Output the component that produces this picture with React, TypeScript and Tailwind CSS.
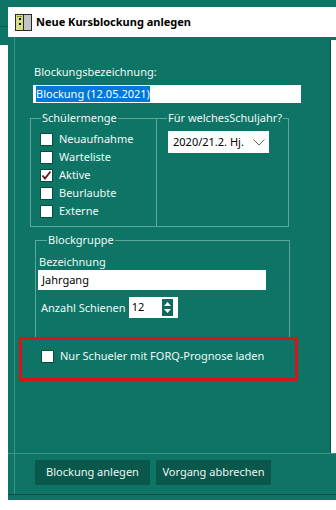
import React from 'react';

const TEAL = 'bg-[#0e7566]';

// Checkbox im Windows-Stil
const Check = ({ label, checked }: { label: string; checked?: boolean }) => (
  <div className="flex items-center h-[18px]">
    <span className="w-[13px] h-[13px] bg-white border border-[#0a4a41] flex items-center justify-center shrink-0">
      {checked && (
        <svg width="11" height="11" viewBox="0 0 11 11">
          <path d="M1.5 5.5 L4 8.5 L9.5 1.5" fill="none" stroke="#5a1616" strokeWidth="1.8" />
        </svg>
      )}
    </span>
    <span className="ml-[6px] text-[11px] leading-[16px] text-[#f2f7f6] whitespace-nowrap">{label}</span>
  </div>
);

// Fenster-Icon im Titel
const TitleIcon = () => (
  <svg width="17" height="17" viewBox="0 0 17 17">
    <rect x="0.5" y="0.5" width="16" height="16" fill="#c4c4c4" stroke="#2a2a2a" />
    <rect x="1" y="1" width="7" height="15" fill="#d9dc8a" />
    <line x1="8.5" y1="1" x2="8.5" y2="16" stroke="#2a2a2a" />
    <rect x="4" y="4" width="2" height="2" fill="#111" />
    <rect x="4" y="9" width="2" height="2" fill="#111" />
    <rect x="2" y="2" width="5" height="1" fill="#7a9a2a" />
  </svg>
);

export default function App() {
  return (
    <div className="w-[336px] h-[510px] bg-white overflow-hidden relative font-['Noto_Sans','DejaVu_Sans',sans-serif]">
      {/* Hintergrund oben */}
      <div className={`h-[7px] ${TEAL}`} />
      <div className="flex">
        <div className="w-[8px] flex flex-col">
          <div className={`h-[20px] ${TEAL} border-b border-[#0a5a4e]`} />
          <div className={`h-[18px] ${TEAL}`} />
        </div>

        {/* Dialogfenster */}
        <div className="w-[328px] h-[493px] flex flex-col">
          <div className="h-[30px] bg-white flex items-center pl-[7px]">
            <TitleIcon />
            <span className="ml-[4px] text-[11px] font-bold text-black">Neue Kursblockung anlegen</span>
          </div>

          <div className={`flex-1 flex flex-col ${TEAL}`}>
            {/* Inhaltsbereich */}
            <div className="h-[416px] flex">
              <div className="w-[6px]" />
              <div className="w-[316px] border-l border-[#3f9383] pt-[27px] flex flex-col">
                <div className="ml-[19px] text-[11px] leading-[16px] text-[#f2f7f6]">Blockungsbezeichnung:</div>
                <div className="ml-[18px] mt-[5px] w-[268px] h-[18px] bg-white flex items-center pl-[3px]">
                  <span className="bg-[#0078d7] text-white text-[11px] leading-[16px]">Blockung (12.05.2021)</span>
                </div>

                <div className="flex mt-[7px] ml-[15px]">
                  <fieldset className="w-[127px] border border-[#5fa598] pb-[6px] pl-[9px]">
                    <legend className="ml-[1px] px-[1px] text-[11px] leading-[16px] text-[#f2f7f6] whitespace-nowrap">Schülermenge</legend>
                    <div className="pt-[4px] flex flex-col">
                      <Check label="Neuaufnahme" />
                      <Check label="Warteliste" />
                      <Check label="Aktive" checked />
                      <Check label="Beurlaubte" />
                      <Check label="Externe" />
                    </div>
                  </fieldset>
                  <fieldset className="w-[132px] border border-l-0 border-[#5fa598]">
                    <legend className="ml-[10px] px-[1px] text-[11px] leading-[16px] text-[#f2f7f6] whitespace-nowrap">Für welchesSchuljahr?</legend>
                    <div className="ml-[11px] mt-[5px] w-[101px] h-[22px] bg-white flex items-center pl-[5px] pr-[4px]">
                      <span className="flex-1 text-[11px] text-black whitespace-nowrap">2020/21.2. Hj.</span>
                      <svg width="12" height="7" viewBox="0 0 12 7">
                        <path d="M0.5 0.5 L6 6 L11.5 0.5" fill="none" stroke="#666" strokeWidth="1" />
                      </svg>
                    </div>
                  </fieldset>
                </div>

                <fieldset className="mt-[5px] ml-[20px] w-[255px] border border-[#5fa598] pb-[21px]">
                  <legend className="ml-[11px] px-[1px] text-[11px] leading-[16px] text-[#f2f7f6]">Blockgruppe</legend>
                  <div className="ml-[3px] mt-[6px] text-[11px] leading-[16px] text-[#f2f7f6]">Bezeichnung</div>
                  <div className="ml-[2px] w-[228px] h-[20px] bg-white flex items-center pl-[4px]">
                    <span className="text-[11px] text-black">Jahrgang</span>
                  </div>
                  <div className="ml-[5px] mt-[7px] flex items-center gap-[3px]">
                    <span className="text-[11px] leading-[16px] text-[#f2f7f6]">Anzahl Schienen</span>
                    <div className="w-[49px] h-[21px] bg-white flex items-center pl-[3px] pr-[5px]">
                      <span className="flex-1 text-[11px] text-black">12</span>
                      <div className="w-[11px] h-[17px] bg-[#106a5c] flex flex-col items-center justify-center gap-[3px]">
                        <svg width="7" height="4" viewBox="0 0 7 4"><path d="M0 4 L3.5 0 L7 4 Z" fill="#fff" /></svg>
                        <svg width="7" height="4" viewBox="0 0 7 4"><path d="M0 0 L3.5 4 L7 0 Z" fill="#fff" /></svg>
                      </div>
                    </div>
                  </div>
                </fieldset>

                <div className="mt-[7px] ml-[26px]">
                  <Check label="Nur Schueler mit FORQ-Prognose laden" />
                </div>
              </div>
              <div className="w-[6px] mt-[3px] border-l border-[#0a4a41] bg-white" />
            </div>

            {/* Schaltflächen */}
            <div className="h-[47px] flex flex-col">
              <div className="h-[1px] bg-[#3f9383]" />
              <div className="h-[40px] flex">
                <div className="w-[6px]" />
                <div className="flex-1 border-l border-[#3f9383] pt-[6px] pl-[20px] flex gap-[6px]">
                  <button className="w-[115px] h-[25px] bg-[#0a584c] text-[11px] text-[#eef5f3]">Blockung anlegen</button>
                  <button className="w-[115px] h-[25px] bg-[#0a584c] text-[11px] text-[#eef5f3]">Vorgang abbrechen</button>
                </div>
              </div>
              <div className="h-[1px] bg-[#0a4a41]" />
              <div className="flex-1" />
            </div>
          </div>
        </div>
      </div>

      {/* rote Markierung */}
      <div className="absolute left-[19px] top-[337px] w-[279px] h-[44px] border-[3px] border-[#d7141c] rounded-[1px]" />
    </div>
  );
}
